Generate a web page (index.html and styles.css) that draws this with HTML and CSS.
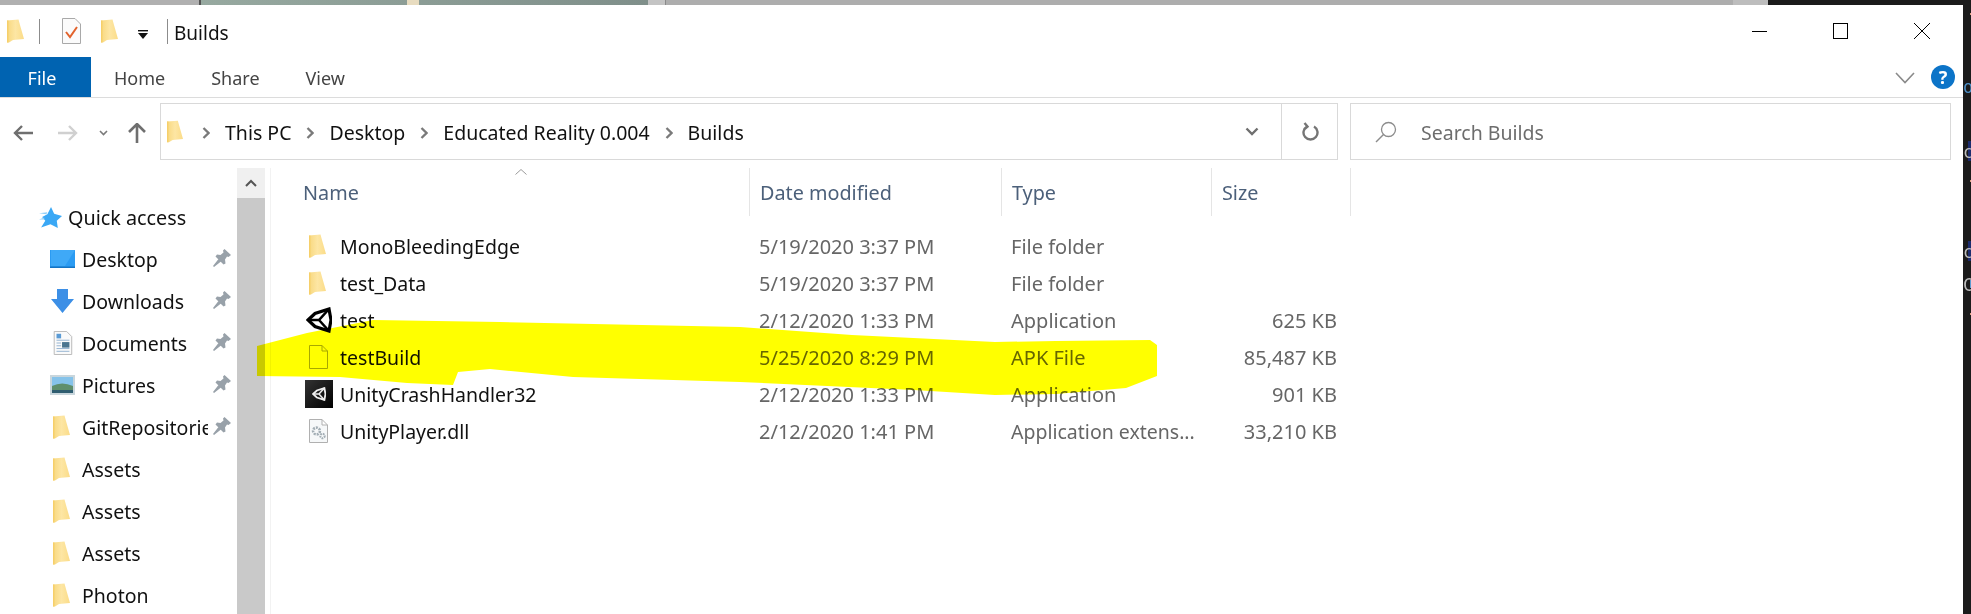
FILE: index.html
```html
<!DOCTYPE html>
<html lang="en">

<head>
  <meta charset="UTF-8">
  <meta name="viewport" content="width=device-width, initial-scale=1.0">
  <title>Builds</title>
  <link rel="stylesheet" href="styles.css">
</head>

<body>
  <svg class="defs" width="0" height="0">
    <defs>
      <linearGradient id="fold" x1="0" y1="0" x2="1" y2="0">
        <stop offset="0" stop-color="#f8d87f" />
        <stop offset="0.5" stop-color="#fde6a4" />
        <stop offset="1" stop-color="#fbdc88" />
      </linearGradient>
      <symbol id="folder" viewBox="0 0 17 24">
        <path d="M0 1.5 L11.5 0.5 L13 6 L17 20 L6 21 L2 23.5 L0 23.5 Z" fill="url(#fold)" />
        <path d="M0 1.5 L1.5 1.4 L1.5 23.5 L0 23.5 Z" fill="#f6cf6a" />
      </symbol>
      <symbol id="pin" viewBox="0 0 18 18">
        <path d="M11.5 0 L18 6 L15.5 8 L14 7.5 L12 10.5 L12.5 14.5 L10.5 15.5 L2.5 7.5 L4 5.5 L7.5 6 L10.5 3.5 L10 1.5 Z M5.5 10 L8 12.5 L1 18 L0 17 Z" fill="#98a1a9" />
      </symbol>
      <symbol id="unity" viewBox="0 0 26 26">
        <g fill="none" stroke="#000" stroke-linejoin="miter">
          <path d="M2 13 L9 6.5 L23 2 L25 13 L23 24 L9 19.5 Z" stroke-width="3.2" />
          <path d="M2 13 H13 L23 2 M13 13 L23 24" stroke-width="2.6" />
        </g>
      </symbol>
    </defs>
  </svg>

  <div class="strip">
    <span class="seg seg-grey"></span>
    <span class="seg seg-photo"><i class="lamp"></i></span>
    <span class="seg seg-pale"></span>
    <span class="seg seg-long"></span>
    <span class="seg seg-pale2"></span>
    <span class="seg seg-dark"></span>
  </div>

  <div class="screen">
    <div class="window">
      <div class="titlebar">
        <svg class="t-folder"><use href="#folder" /></svg>
        <span class="t-sep first"></span>
        <svg class="t-doc" viewBox="0 0 19 26">
          <path d="M0.5 0.5 H13 L18.5 6 V25.5 H0.5 Z" fill="#fbfbfb" stroke="#a9a9a9" />
          <path d="M4 14 L8 19 L15 9" fill="none" stroke="#e2622c" stroke-width="2" />
        </svg>
        <svg class="t-folder second"><use href="#folder" /></svg>
        <svg class="t-drop" viewBox="0 0 12 9">
          <rect x="1" y="0" width="10" height="1.4" fill="#111" />
          <path d="M1 3 H11 L6 9 Z" fill="#111" />
        </svg>
        <span class="t-sep"></span>
        <span class="t-name">Builds</span>
        <div class="caption">
          <svg class="cap-btn" viewBox="0 0 18 18"><path d="M1 9.5 H16" stroke="#000" /></svg>
          <svg class="cap-btn" viewBox="0 0 18 18"><rect x="1.5" y="1.5" width="14" height="15" fill="none" stroke="#000" /></svg>
          <svg class="cap-btn" viewBox="0 0 18 18"><path d="M1 1 L17 17 M17 1 L1 17" stroke="#000" /></svg>
        </div>
      </div>

      <div class="ribbon">
        <span class="tab active">File</span>
        <span class="tab">Home</span>
        <span class="tab">Share</span>
        <span class="tab">View</span>
        <svg class="rib-chev" viewBox="0 0 20 12"><path d="M1 1 L10 10.5 L19 1" fill="none" stroke="#8a8a8a" stroke-width="1.6" /></svg>
        <span class="help">?</span>
      </div>

      <div class="navbar">
        <svg class="nav-btn back" viewBox="0 0 20 16"><path d="M9 1 L2 8 L9 15 M2 8 H20" fill="none" stroke="#6f6f6f" stroke-width="2.4" /></svg>
        <svg class="nav-btn fwd" viewBox="0 0 20 16"><path d="M11 1 L18 8 L11 15 M18 8 H0" fill="none" stroke="#d0d0d0" stroke-width="2.4" /></svg>
        <svg class="nav-drop" viewBox="0 0 9 6"><path d="M1 1 L4.5 4.5 L8 1" fill="none" stroke="#7a7a7a" stroke-width="1.6" /></svg>
        <svg class="nav-up" viewBox="0 0 18 20"><path d="M1 9 L9 1 L17 9 M9 1 V20" fill="none" stroke="#6f6f6f" stroke-width="2.6" /></svg>

        <div class="address">
          <svg class="a-folder"><use href="#folder" /></svg>
          <div class="crumbs">
            <svg class="crumb-chev" viewBox="0 0 8 12"><path d="M1.5 1 L6.5 6 L1.5 11" fill="none" stroke="#7a7a7a" stroke-width="2.3" /></svg>
            <span>This PC</span>
            <svg class="crumb-chev" viewBox="0 0 8 12"><path d="M1.5 1 L6.5 6 L1.5 11" fill="none" stroke="#7a7a7a" stroke-width="2.3" /></svg>
            <span>Desktop</span>
            <svg class="crumb-chev" viewBox="0 0 8 12"><path d="M1.5 1 L6.5 6 L1.5 11" fill="none" stroke="#7a7a7a" stroke-width="2.3" /></svg>
            <span>Educated Reality 0.004</span>
            <svg class="crumb-chev" viewBox="0 0 8 12"><path d="M1.5 1 L6.5 6 L1.5 11" fill="none" stroke="#7a7a7a" stroke-width="2.3" /></svg>
            <span>Builds</span>
          </div>
          <div class="addr-drop">
            <svg viewBox="0 0 14 9"><path d="M1.5 1.5 L7 7 L12.5 1.5" fill="none" stroke="#6f6f6f" stroke-width="2.4" /></svg>
          </div>
          <div class="addr-refresh">
            <svg viewBox="0 0 18 20"><path d="M6 4.5 A7 7 0 1 0 13 4.5 M3.5 1 L6.5 4.5 L3 7.5" fill="none" stroke="#757575" stroke-width="2.4" /></svg>
          </div>
        </div>

        <div class="search">
          <svg class="s-icon" viewBox="0 0 22 22"><circle cx="13.5" cy="8.5" r="7" fill="none" stroke="#8c8c8c" stroke-width="1.3" /><path d="M8.5 13.5 L1 21" stroke="#8c8c8c" stroke-width="1.4" /></svg>
          <span>Search Builds</span>
        </div>
      </div>

      <div class="content">
        <div class="tree">
          <div class="tree-row quick">
            <svg class="tree-icon star" viewBox="0 0 22 20">
              <path d="M11.5 0 L14.5 6.5 L22 8.5 L17 13 L18 20 L11 16.5 L2 19.5 L6 13 L3 9.5 L8 7 Z" fill="#3aa8f5" />
              <path d="M0 6 L8 5 L7 7 Z M0 12 L5 10 L5 12 Z" fill="#8fcff9" />
            </svg>
            <span class="tree-label">Quick access</span>
          </div>
          <div class="tree-row">
            <svg class="tree-icon" viewBox="0 0 25 18"><rect width="25" height="18" fill="#2b9bf2" /><path d="M0 16.5 H25 V18 H0 Z" fill="#1574c4" /><path d="M1 0 H25 L15 16 H1 Z" fill="#3fa9f7" /></svg>
            <span class="tree-label">Desktop</span>
            <svg class="tree-pin"><use href="#pin" /></svg>
          </div>
          <div class="tree-row">
            <svg class="tree-icon" viewBox="0 0 25 24"><path d="M7 0 H18 V10 H24 L12.5 24 L1 10 H7 Z" fill="#3c8fe6" /></svg>
            <span class="tree-label">Downloads</span>
            <svg class="tree-pin"><use href="#pin" /></svg>
          </div>
          <div class="tree-row">
            <svg class="tree-icon" viewBox="0 0 25 26">
              <path d="M3.5 0.5 H17 L22.5 6 V25.5 H3.5 Z" fill="#fafafa" stroke="#b5b5b5" />
              <path d="M6 3 H11 V8 H6 Z" fill="#5b9bd5" />
              <path d="M6 10 H20 M6 13 H11 M6 16 H11 M6 19 H20 M6 22 H20" stroke="#8fb0cf" />
              <rect x="12" y="12" width="8" height="6" fill="#4a7590" />
            </svg>
            <span class="tree-label">Documents</span>
            <svg class="tree-pin"><use href="#pin" /></svg>
          </div>
          <div class="tree-row">
            <svg class="tree-icon" viewBox="0 0 25 20">
              <rect width="25" height="20" fill="#c9d6dc" />
              <rect x="2" y="2" width="21" height="9" fill="#86c3ea" />
              <path d="M2 11 Q12 6 23 11 V18 H2 Z" fill="#5f8f6c" />
              <rect x="2" y="15" width="21" height="3" fill="#2f5d70" />
            </svg>
            <span class="tree-label">Pictures</span>
            <svg class="tree-pin"><use href="#pin" /></svg>
          </div>
          <div class="tree-row">
            <svg class="tree-folder"><use href="#folder" /></svg>
            <span class="tree-label clip">GitRepositories</span>
            <svg class="tree-pin"><use href="#pin" /></svg>
          </div>
          <div class="tree-row">
            <svg class="tree-folder"><use href="#folder" /></svg>
            <span class="tree-label">Assets</span>
          </div>
          <div class="tree-row">
            <svg class="tree-folder"><use href="#folder" /></svg>
            <span class="tree-label">Assets</span>
          </div>
          <div class="tree-row">
            <svg class="tree-folder"><use href="#folder" /></svg>
            <span class="tree-label">Assets</span>
          </div>
          <div class="tree-row">
            <svg class="tree-folder"><use href="#folder" /></svg>
            <span class="tree-label">Photon</span>
          </div>
        </div>

        <div class="scrollbar">
          <div class="scroll-up">
            <svg viewBox="0 0 12 8"><path d="M1 7 L6 2 L11 7" fill="none" stroke="#555" stroke-width="2" /></svg>
          </div>
        </div>

        <div class="files">
          <div class="cols head">
            <div class="col-name">Name<svg class="sort" viewBox="0 0 12 6"><path d="M0.5 5.5 L6 0.5 L11.5 5.5" fill="none" stroke="#9a9a9a" /></svg></div>
            <div class="col">Date modified</div>
            <div class="col">Type</div>
            <div class="col end">Size</div>
          </div>

          <div class="cols row">
            <div class="col-name"><span class="slot"><svg class="f-folder"><use href="#folder" /></svg></span>MonoBleedingEdge</div>
            <div class="col">5/19/2020 3:37 PM</div>
            <div class="col">File folder</div>
            <div class="col size"></div>
          </div>
          <div class="cols row">
            <div class="col-name"><span class="slot"><svg class="f-folder"><use href="#folder" /></svg></span>test_Data</div>
            <div class="col">5/19/2020 3:37 PM</div>
            <div class="col">File folder</div>
            <div class="col size"></div>
          </div>
          <div class="cols row">
            <div class="col-name"><span class="slot"><svg class="f-unity"><use href="#unity" /></svg></span>test</div>
            <div class="col">2/12/2020 1:33 PM</div>
            <div class="col">Application</div>
            <div class="col size">625 KB</div>
          </div>
          <div class="cols row">
            <div class="col-name"><span class="slot"><svg class="f-page" viewBox="0 0 19 24"><path d="M0.5 0.5 H13 L18.5 6 V23.5 H0.5 Z M13 0.5 V6 H18.5" fill="#fff" stroke="#a8a8a8" /></svg></span>testBuild</div>
            <div class="col">5/25/2020 8:29 PM</div>
            <div class="col">APK File</div>
            <div class="col size">85,487 KB</div>
          </div>
          <div class="cols row">
            <div class="col-name"><span class="slot"><svg class="f-crash" viewBox="0 0 28 28">
                  <defs><linearGradient id="crash" x1="0" y1="0" x2="1" y2="1"><stop offset="0" stop-color="#333" /><stop offset="1" stop-color="#000" /></linearGradient></defs>
                  <rect width="28" height="28" fill="url(#crash)" />
                  <svg x="7" y="7" width="14" height="14" viewBox="0 0 26 26">
                    <g fill="none" stroke="#eee">
                      <path d="M2 13 L9 6.5 L23 2 L25 13 L23 24 L9 19.5 Z" stroke-width="3.4" />
                      <path d="M2 13 H13 L23 2 M13 13 L23 24" stroke-width="2.8" />
                    </g>
                  </svg>
                </svg></span>UnityCrashHandler32</div>
            <div class="col">2/12/2020 1:33 PM</div>
            <div class="col">Application</div>
            <div class="col size">901 KB</div>
          </div>
          <div class="cols row">
            <div class="col-name"><span class="slot"><svg class="f-page" viewBox="0 0 19 24">
                  <path d="M0.5 0.5 H13 L18.5 6 V23.5 H0.5 Z M13 0.5 V6 H18.5" fill="#f6f8f9" stroke="#b0b0b0" />
                  <circle cx="7.5" cy="12" r="3.4" fill="none" stroke="#a3aeb5" stroke-width="2.6" stroke-dasharray="2 1" />
                  <circle cx="13.5" cy="17" r="2.2" fill="none" stroke="#a3aeb5" stroke-width="2" stroke-dasharray="1.6 0.8" />
                </svg></span>UnityPlayer.dll</div>
            <div class="col">2/12/2020 1:41 PM</div>
            <div class="col ext">Application extens...</div>
            <div class="col size">33,210 KB</div>
          </div>
        </div>
      </div>
    </div>

    <div class="codeside">
      <i class="code-bar b1"></i>
      <i class="code-bar b2"></i>
      <i class="code-bar b3"></i>
      <i class="code-dot d1"></i>
      <i class="code-dot d2"></i>
      <i class="code-dot d3"></i>
      <span class="code-o">o</span>
      <span class="code-c c1">c</span>
      <span class="code-c c2">c</span>
      <span class="code-c c3">C</span>
    </div>
  </div>

  <!-- marker scribble over the testBuild row -->
  <svg class="marker" viewBox="0 0 1971 614">
    <path d="M257 346 L307 333 L373 320 L500 322 L740 327 L852 335 L995 342 L1056 341 L1150 340 L1157 345 L1157 376 L1126 388 L1056 394 L995 395 L914 390 L740 382 L573 377 L490 369 L458 372 L453 385 L407 383 L340 377 L257 376 Z" fill="#ffff00" />
  </svg>
</body>

</html>
```
FILE: styles.css
```css
* {
  box-sizing: border-box;
}

html,
body {
  height: 100%;
}

body {
  margin: 0;
  overflow: hidden;
  background: #fff;
  color: #111;
  font-family: 'Noto Sans', 'Open Sans', sans-serif;
  font-size: 19.5px;
  position: relative;
}

svg {
  display: block;
  flex: none;
}

.defs {
  position: absolute;
}

/* what is left of the windows behind */
.strip {
  height: 5px;
  display: flex;
}

.seg {
  display: block;
  height: 5px;
}

.seg-grey {
  width: 201px;
  background: #b0b0b0;
  border-right: 2px solid #555;
}

.seg-photo {
  width: 447px;
  background: linear-gradient(90deg, #97a9a0, #7f8f8a);
  position: relative;
}

.lamp {
  position: absolute;
  left: 206px;
  top: 0;
  width: 12px;
  height: 5px;
  background: #e8dcc0;
}

.seg-pale {
  width: 18px;
  background: #c4c4c4;
  border-right: 1px solid #8a8a8a;
}

.seg-long {
  width: 1067px;
  background: #adadad;
}

.seg-pale2 {
  width: 35px;
  background: #bdbdbd;
}

.seg-dark {
  flex: 1;
  background: #1b1b1b;
}

.screen {
  display: flex;
  height: 609px;
}

.window {
  width: 1963px;
  background: #fff;
}

/* title bar */
.titlebar {
  height: 52px;
  display: flex;
  align-items: center;
  padding-left: 7px;
  position: relative;
}

.t-folder {
  width: 17px;
  height: 24px;
}

.t-folder.second {
  margin-left: 20px;
}

.t-sep {
  width: 1px;
  height: 25px;
  background: #8c8c8c;
  margin-left: 18px;
}

.t-sep.first {
  margin-left: 15px;
}

.t-doc {
  width: 19px;
  height: 26px;
  margin-left: 22px;
}

.t-drop {
  width: 12px;
  height: 9px;
  margin-left: 19px;
  margin-top: 7px;
}

.t-name {
  margin: 3px 0 0 6px;
  font-size: 19px;
}

.caption {
  margin-left: auto;
  display: flex;
  gap: 63px;
  padding-right: 32px;
}

.cap-btn {
  width: 18px;
  height: 18px;
}

/* ribbon tabs */
.ribbon {
  height: 41px;
  display: flex;
  align-items: stretch;
  border-bottom: 1px solid #dcdcdc;
  position: relative;
}

.tab {
  display: flex;
  align-items: center;
  color: #444;
  font-size: 18px;
  padding-top: 1px;
  margin-left: 46px;
}

.tab:nth-child(2) {
  margin-left: 23px;
}

.tab.active {
  width: 91px;
  margin: 0;
  padding: 1px 7px 0 0;
  justify-content: center;
  background: #0063b1;
  color: #fff;
}

.rib-chev {
  width: 20px;
  height: 12px;
  margin: 15px 0 0 auto;
}

.help {
  width: 24px;
  height: 24px;
  margin: 8px 8px 0 16px;
  border-radius: 50%;
  background: #0c74c8;
  color: #fff;
  font-size: 18px;
  font-weight: 700;
  line-height: 24px;
  text-align: center;
}

/* address row */
.navbar {
  height: 70px;
  padding-top: 5px;
  display: flex;
  align-items: flex-start;
}

.nav-btn {
  width: 20px;
  height: 16px;
  margin-top: 22px;
}

.back {
  margin-left: 13px;
}

.fwd {
  margin-left: 25px;
}

.nav-drop {
  width: 9px;
  height: 6px;
  margin: 27px 0 0 21px;
}

.nav-up {
  width: 18px;
  height: 20px;
  margin: 20px 0 0 20px;
}

.address {
  width: 1178px;
  height: 57px;
  margin-left: 14px;
  border: 1px solid #d9d9d9;
  display: flex;
  align-items: center;
}

.a-folder {
  width: 16px;
  height: 23px;
  margin-left: 6px;
}

.crumbs {
  display: flex;
  align-items: center;
  gap: 15px;
  margin-left: 19px;
  padding-top: 2px;
  flex: 1;
}

.crumb-chev {
  width: 8px;
  height: 12px;
}

.addr-drop,
.addr-refresh {
  height: 100%;
  display: flex;
  align-items: center;
  justify-content: center;
}

.addr-drop {
  width: 58px;
}

.addr-drop svg {
  width: 14px;
  height: 9px;
}

.addr-refresh {
  width: 56px;
  border-left: 1px solid #d9d9d9;
}

.addr-refresh svg {
  width: 18px;
  height: 20px;
}

.search {
  width: 601px;
  height: 57px;
  margin-left: 12px;
  border: 1px solid #d9d9d9;
  display: flex;
  align-items: center;
  color: #6d6d6d;
  padding-top: 1px;
}

.s-icon {
  width: 22px;
  height: 22px;
  margin: 0 24px 0 24px;
}

/* left tree and file list */
.content {
  display: flex;
  height: 447px;
}

.tree {
  width: 237px;
  padding-top: 28px;
}

.tree-row {
  height: 42px;
  display: flex;
  align-items: center;
  padding-left: 50px;
  position: relative;
}

.quick {
  padding-left: 39px;
}

.tree-icon {
  width: 25px;
  height: 24px;
}

.star {
  width: 23px;
  height: 21px;
  margin-right: 6px;
}

.tree-label {
  margin-left: 7px;
  white-space: nowrap;
}

.star + .tree-label {
  margin-left: 0;
  font-size: 19.8px;
}

.clip {
  width: 126px;
  overflow: hidden;
}

.tree-pin {
  position: absolute;
  left: 213px;
  top: 11px;
  width: 18px;
  height: 18px;
}

.tree-folder {
  width: 17px;
  height: 24px;
  margin: 0 5px 0 3px;
}

.scrollbar {
  width: 28px;
  background: #c9c9c9;
}

.scroll-up {
  height: 30px;
  background: #f0f0f0;
  display: flex;
  align-items: center;
  justify-content: center;
}

.scroll-up svg {
  width: 12px;
  height: 8px;
}

.files {
  margin-left: 5px;
  border-left: 1px solid #f2f2f2;
  flex: 1;
}

.cols {
  display: grid;
  grid-template-columns: 478px 252px 210px 140px;
  align-items: center;
}

.head {
  height: 48px;
  margin-bottom: 11.5px;
  color: #4c607a;
  align-items: stretch;
  font-size: 19.8px;
}

.head .col-name {
  padding: 0 0 0 32px;
  position: relative;
  display: flex;
  align-items: center;
}

.head .col {
  border-left: 1px solid #e5e5e5;
  padding: 0 0 0 10px;
  display: flex;
  align-items: center;
}

.head .end {
  border-right: 1px solid #e5e5e5;
}

.sort {
  position: absolute;
  left: 244px;
  top: 1px;
  width: 12px;
  height: 6px;
}

.row {
  height: 37px;
  color: #666;
}

.row .col {
  padding-left: 10px;
  white-space: nowrap;
  font-size: 20px;
}

.row .ext {
  font-size: 19.5px;
}

.row .col-name {
  display: flex;
  align-items: center;
  color: #111;
}

.row .size {
  text-align: right;
  padding-right: 14px;
}

.slot {
  width: 69px;
  padding-left: 35px;
  display: flex;
  align-items: center;
  justify-content: flex-start;
}

.f-folder {
  width: 17px;
  height: 24px;
  margin-left: 3px;
}

.f-unity {
  width: 26px;
  height: 26px;
}

.f-page {
  width: 19px;
  height: 24px;
  margin-left: 3px;
}

.f-crash {
  width: 28px;
  height: 28px;
  margin-left: -1px;
}

/* sliver of the code editor on the right */
.codeside {
  width: 8px;
  background: #1b1b1b;
  position: relative;
  overflow: hidden;
  font-family: 'DejaVu Sans Mono', monospace;
  font-size: 17px;
}

.codeside span {
  position: absolute;
  left: 0;
  line-height: 20px;
}

.code-bar {
  position: absolute;
  left: 5px;
  width: 3px;
  height: 20px;
  background: #1c2c6e;
}

.b1 {
  top: 136px;
}

.b2 {
  top: 236px;
}

.b3 {
  top: 275px;
  left: 7px;
  height: 8px;
  background: #5a9bd0;
}

.code-dot {
  position: absolute;
  left: 7px;
  width: 1px;
  height: 2px;
  background: #d8a080;
}

.d1 {
  top: 8px;
}

.d2 {
  top: 175px;
}

.d3 {
  top: 308px;
}

.code-o {
  top: 72px;
  color: #4d8ec4;
}

.code-c {
  color: #bdbdbd;
}

.c1 {
  top: 137px;
}

.c2 {
  top: 237px;
}

.c3 {
  top: 270px;
}

.marker {
  position: absolute;
  left: 0;
  top: 0;
  width: 1971px;
  height: 614px;
  mix-blend-mode: multiply;
  pointer-events: none;
}
```
